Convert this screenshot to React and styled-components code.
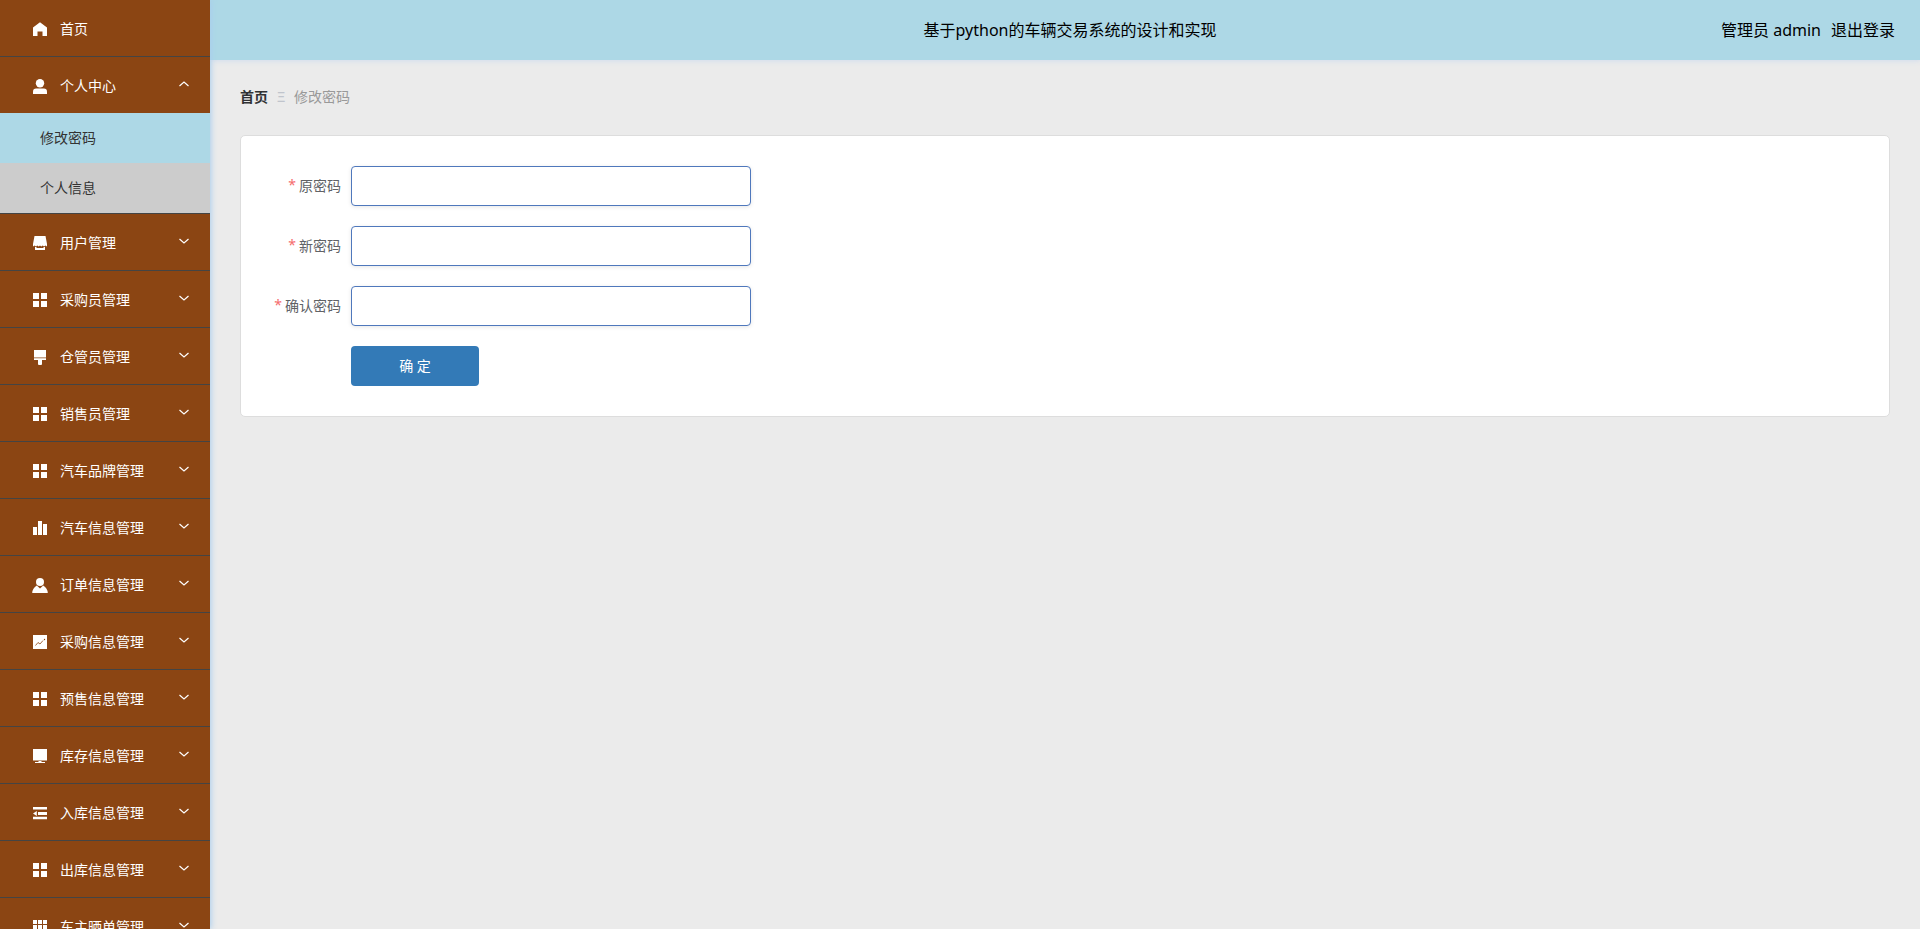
import React, { useState } from 'react';
import styled, { createGlobalStyle } from 'styled-components';

const sidebarWidth = 210;

const GlobalStyle = createGlobalStyle`
  * {
    box-sizing: border-box;
  }
  body {
    margin: 0;
    background: #ebebeb;
    font-family: "Noto Sans", "Noto Sans CJK SC", sans-serif;
    font-size: 14px;
    color: #333;
  }
  button, input {
    font-family: inherit;
  }
`;

// styled components
const Layout = styled.div`
  display: flex;
  height: 100vh;
  overflow: hidden;
`;
const Sidebar = styled.nav`
  width: ${sidebarWidth}px;
  flex-shrink: 0;
  overflow-y: auto;
  scrollbar-width: none;
  background: #8b4513;
  box-shadow: 1px 0 6px #a8cdee;
  z-index: 2;
`;
const Menu = styled.ul`
  list-style: none;
  margin: 0;
  padding: 0;
`;
const MenuItem = styled.li`
  border-bottom: 1px solid #444;
`;
const MenuButton = styled.button`
  display: flex;
  align-items: center;
  width: 100%;
  height: 56px;
  padding: 0 20px 0 32px;
  border: 0;
  background: transparent;
  color: #fff;
  font-size: 14px;
  cursor: pointer;
`;
const MenuIcon = styled.svg`
  width: 16px;
  height: 16px;
  margin: 2px 12px 0 0;
  fill: #fff;
`;
const Arrow = styled.svg`
  width: 12px;
  height: 12px;
  margin: 0 0 2px auto;
  fill: none;
  stroke: #fff;
  stroke-width: 1.2;
`;
const SubLink = styled.a`
  display: flex;
  align-items: center;
  height: 50px;
  padding: 0 0 2px 40px;
  background: ${props => props.$active ? '#add8e6' : '#ccc'};
  color: #333;
  text-decoration: none;
`;
const Main = styled.div`
  flex: 1;
  min-width: 0;
`;
const Header = styled.header`
  display: grid;
  grid-template-columns: 1fr auto 1fr;
  align-items: center;
  height: 60px;
  padding: 0 25px 2px 35px;
  background: #add8e6;
  box-shadow: 1px 0 6px #c8d8ee;
  color: #000;
  font-size: 16px;
`;
const Title = styled.span`
  grid-column: 2;
`;
const UserInfo = styled.div`
  display: flex;
  justify-content: flex-end;
  gap: 10px;
`;
const LogoutLink = styled.a`
  color: inherit;
  text-decoration: none;
`;
const Content = styled.main`
  padding: 26px 30px;
`;
const Breadcrumb = styled.nav`
  display: flex;
  align-items: center;
  height: 20px;
  margin-bottom: 29px;
  color: #999;
`;
const BreadcrumbLink = styled.a`
  color: #303133;
  font-weight: 700;
  text-decoration: none;
`;
const Separator = styled.span`
  width: 26px;
  color: #c0c4cc;
  text-align: center;
`;
const Card = styled.form`
  display: grid;
  row-gap: 20px;
  padding: 30px;
  border: 1px solid #ddd;
  border-radius: 5px;
  background: #fff;
`;
const FormRow = styled.div`
  display: flex;
  align-items: center;
  padding-left: ${props => props.$indent ? '80px' : '0'};
`;
const Label = styled.label`
  display: flex;
  justify-content: flex-end;
  width: 80px;
  padding: 0 10px 2px 0;
  color: #606266;
  white-space: nowrap;

  &::before {
    content: '*';
    margin-right: 3px;
    color: #f56c6c;
  }
`;
const Input = styled.input`
  width: 400px;
  height: 40px;
  padding: 0 12px;
  border: 1px solid #4f78bc;
  border-radius: 4px;
  background: #fff;
  box-shadow: 0 1px 4px rgba(0, 0, 0, 0.1);
  outline: none;
`;
const SubmitButton = styled.button`
  width: 128px;
  height: 40px;
  padding: 0 0 2px;
  border: 0;
  border-radius: 4px;
  background: #337ab7;
  color: #fff;
  font-size: 14px;
  cursor: pointer;
`;

// menu icons, drawn on a 16px grid
const icons = {
  home: <path d="M8 1.200 15 6.500V15h-4.500v-4.500h-5V15H1V6.500z" />,
  user: (
    <>
      <circle cx="8" cy="5.2" r="4.2" />
      <path d="M1 16v-2.300Q1 10.500 4.200 10.500h7.600Q15 10.500 15 13.700V16z" />
    </>
  ),
  printer: (
    <>
      <path d="M2.500 1h11L15 9v2.500l-1.500-1-1.500 1-1.300-1-1.400 1-1.300-1-1.300 1-1.400-1-1.300 1-1.500-1-1.500 1V9z" />
      <path d="M3 12h1.500v1h7v-1H13v3H3z" />
    </>
  ),
  grid: <path d="M1 1h6v6H1zM9 1h6v6H9zM1 9h6v6H1zM9 9h6v6H9z" />,
  brush: <path d="M2 1h12v7.500H2zM2 9.200h12V11h-4v4.500L9 16H7l-1-.5V11H2z" />,
  bars: <path d="M1 7h4v8H1zM6 1h4v14H6zM11 4h4v11h-4z" />,
  custom: (
    <>
      <circle cx="8" cy="5" r="4" />
      <path d="M4.800 8.500 8 11.500l3.200-3Q15.500 11 15.800 16H.2Q.5 11 4.800 8.500z" />
    </>
  ),
  trend: (
    <>
      <path d="M1 1h14v14H1z" />
      <path d="m3.500 11.500 2.500-3 2 1.500 3-3.500" fill="none" stroke="#8b4513" strokeWidth="0.8" />
      <circle cx="12.500" cy="5.500" r="0.7" fill="#8b4513" />
    </>
  ),
  monitor: <path d="M1 1h14v11.500H1zM6.500 13h3v1H13v1H3v-1h3.500z" />,
  fold: <path d="M1 2h14v2.500H1zM6 7h9v3H6zM1 11.800h14v2.400H1zM1 8.400 4.800 6v5z" />,
  cells: <path d="M1 1h4v4H1zM6 1h4v4H6zM11 1h4v4h-4zM1 6h4v4H1zM6 6h4v4H6zM11 6h4v4h-4zM1 11h4v4H1zM6 11h4v4H6zM11 11h4v4h-4z" />,
};

const menuList = [
  { text: '首页', icon: 'home' },
  { text: '个人中心', icon: 'user', list: ['修改密码', '个人信息'] },
  { text: '用户管理', icon: 'printer', list: [] },
  { text: '采购员管理', icon: 'grid', list: [] },
  { text: '仓管员管理', icon: 'brush', list: [] },
  { text: '销售员管理', icon: 'grid', list: [] },
  { text: '汽车品牌管理', icon: 'grid', list: [] },
  { text: '汽车信息管理', icon: 'bars', list: [] },
  { text: '订单信息管理', icon: 'custom', list: [] },
  { text: '采购信息管理', icon: 'trend', list: [] },
  { text: '预售信息管理', icon: 'grid', list: [] },
  { text: '库存信息管理', icon: 'monitor', list: [] },
  { text: '入库信息管理', icon: 'fold', list: [] },
  { text: '出库信息管理', icon: 'grid', list: [] },
  { text: '车主晒单管理', icon: 'cells', list: [] },
];

const fields = [
  { name: 'password', label: '原密码' },
  { name: 'newpassword', label: '新密码' },
  { name: 'repassword', label: '确认密码' },
];

// main component
const App = () => {
  const [opened, setOpened] = useState('个人中心');
  const [active, setActive] = useState('修改密码');

  const renderMenuItem = item => {
    const isOpen = opened === item.text;
    return (
      <MenuItem key={item.text}>
        <MenuButton type="button" onClick={() => setOpened(isOpen ? '' : item.text)}>
          <MenuIcon viewBox="0 0 16 16">{icons[item.icon]}</MenuIcon>
          {item.text}
          {item.list && (
            <Arrow viewBox="0 0 12 12">
              <path d={isOpen ? 'm1.500 8 4.500-4 4.500 4' : 'm1.500 4 4.500 4 4.500-4'} />
            </Arrow>
          )}
        </MenuButton>
        {isOpen && item.list && item.list.map(text => (
          <SubLink
            key={text}
            href="#"
            $active={active === text}
            onClick={() => setActive(text)}
          >
            {text}
          </SubLink>
        ))}
      </MenuItem>
    );
  };

  return (
    <Layout>
      <GlobalStyle />
      { /* SIDE MENU */ }
      <Sidebar>
        <Menu>{menuList.map(renderMenuItem)}</Menu>
      </Sidebar>
      <Main>
        { /* HEADER BAR */ }
        <Header>
          <Title>基于python的车辆交易系统的设计和实现</Title>
          <UserInfo>
            <span>管理员 admin</span>
            <LogoutLink href="#">退出登录</LogoutLink>
          </UserInfo>
        </Header>
        { /* PASSWORD FORM */ }
        <Content>
          <Breadcrumb>
            <BreadcrumbLink href="#">首页</BreadcrumbLink>
            <Separator>Ξ</Separator>
            <span>修改密码</span>
          </Breadcrumb>
          <Card onSubmit={e => e.preventDefault()}>
            {fields.map(field => (
              <FormRow key={field.name}>
                <Label htmlFor={field.name}>{field.label}</Label>
                <Input id={field.name} name={field.name} type="password" />
              </FormRow>
            ))}
            <FormRow $indent>
              <SubmitButton type="submit">确 定</SubmitButton>
            </FormRow>
          </Card>
        </Content>
      </Main>
    </Layout>
  );
};

export default App;
